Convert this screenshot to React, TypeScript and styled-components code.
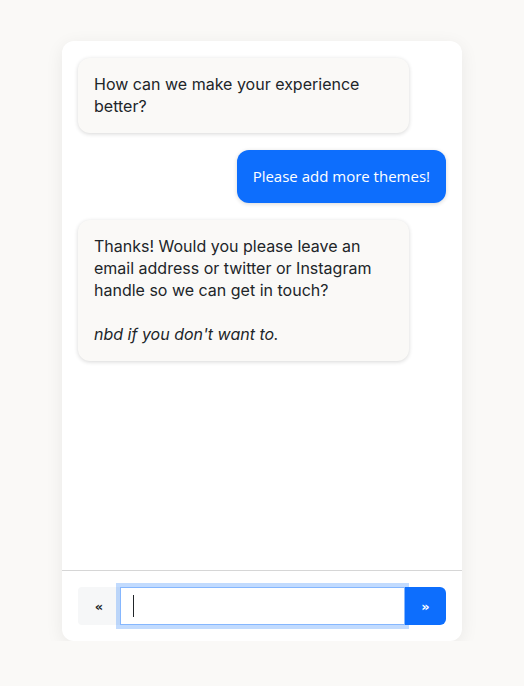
import React from "react";
import styled, { createGlobalStyle } from "styled-components";

const Global = createGlobalStyle`
  html, body { margin: 0; padding: 0; background: #faf9f7; }
  body { font-family: "Inter", "Liberation Sans", sans-serif; color: #212529; }
  * { box-sizing: border-box; }
`;

const Page = styled.div`
  display: flex;
  justify-content: center;
  padding-top: 41px;
`;

const Card = styled.div`
  width: 400px;
  height: 600px;
  background: #ffffff;
  border-radius: 12px;
  box-shadow: 0 4px 18px rgba(0, 0, 0, 0.07);
  display: flex;
  flex-direction: column;
  overflow: hidden;
`;

const Messages = styled.div`
  flex: 1;
  padding: 17px 16px 16px;
  display: flex;
  flex-direction: column;
  gap: 17px;
`;

const Bubble = styled.div<{ $sent?: boolean }>`
  max-width: 90%;
  align-self: ${(p) => (p.$sent ? "flex-end" : "flex-start")};
  padding: ${(p) => (p.$sent ? "16px 16px" : "15px 16px 16px")};
  border-radius: 12px;
  font-size: ${(p) => (p.$sent ? "15px" : "16px")};
  line-height: ${(p) => (p.$sent ? "21px" : "22px")};
  background: ${(p) => (p.$sent ? "#0d6efd" : "#faf9f7")};
  color: ${(p) => (p.$sent ? "#ffffff" : "#212529")};
  font-family: ${(p) =>
    p.$sent ? `"Open Sans", "Noto Sans", sans-serif` : `"Inter", "Liberation Sans", sans-serif`};
  box-shadow: 0 1px 4px rgba(0, 0, 0, 0.16);
  p { margin: 0; }
  p + p { margin-top: 22px; }
`;

const Footer = styled.div`
  border-top: 1px solid #d6d6d6;
  padding: 16px;
`;

const InputGroup = styled.div`
  display: flex;
  height: 38px;
`;

const NavButton = styled.button<{ $primary?: boolean }>`
  border: none;
  width: ${(p) => (p.$primary ? "41px" : "42px")};
  background: ${(p) => (p.$primary ? "#0d6efd" : "#f6f7f8")};
  color: ${(p) => (p.$primary ? "#ffffff" : "#212529")};
  font-family: "DejaVu Sans", sans-serif;
  font-size: 13px;
  font-weight: bold;
  border-radius: ${(p) => (p.$primary ? "0 6px 6px 0" : "4px 0 0 4px")};
  position: relative;
  z-index: ${(p) => (p.$primary ? 6 : 1)};
  padding: 0;
  display: flex;
  align-items: center;
  justify-content: center;
`;

const Field = styled.div`
  flex: 1;
  min-width: 0;
  position: relative;
  z-index: 5;
  display: flex;
`;

const TextInput = styled.input`
  flex: 1;
  min-width: 0;
  border: 1px solid #86b7fe;
  box-shadow: 0 0 0 4px rgba(13, 110, 253, 0.25);
  outline: none;
  padding: 0 12px;
  font-size: 16px;
  font-family: "Inter", sans-serif;
  color: #212529;
  caret-color: transparent;
  background: #fff;
`;

const Caret = styled.span`
  position: absolute;
  left: 13px;
  top: 8px;
  width: 1px;
  height: 22px;
  background: #212529;
  pointer-events: none;
`;

export default function App() {
  return (
    <>
      <Global />
      <Page>
        <Card>
          <Messages>
            <Bubble>
              <p>How can we make your experience better?</p>
            </Bubble>
            <Bubble $sent>Please add more themes!</Bubble>
            <Bubble>
              <p>Thanks! Would you please leave an email address or twitter or Instagram handle so we can get in touch?</p>
              <p>
                <em>nbd if you don't want to.</em>
              </p>
            </Bubble>
          </Messages>
          <Footer>
            <InputGroup>
              <NavButton>«</NavButton>
              <Field>
                <TextInput autoFocus />
                <Caret />
              </Field>
              <NavButton $primary>»</NavButton>
            </InputGroup>
          </Footer>
        </Card>
      </Page>
    </>
  );
}
